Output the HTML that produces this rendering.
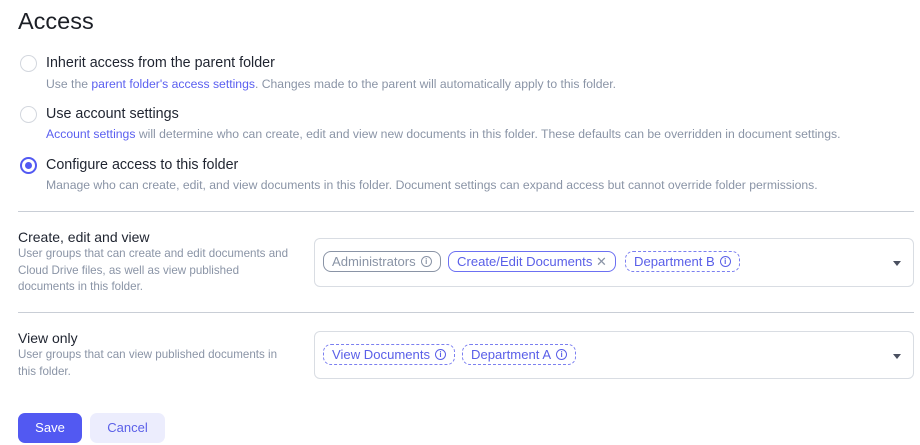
<!DOCTYPE html>
<html><head><style>
*{margin:0;padding:0;box-sizing:border-box}
body{width:920px;height:445px;background:#fff;font-family:"Liberation Sans",sans-serif;position:relative;overflow:hidden;color:#1f2430}
.a{position:absolute;white-space:nowrap}
h1{position:absolute;left:18px;top:8px;font-size:23.5px;font-weight:400;color:#1c1f26}
.r{position:absolute;left:20px;width:17px;height:17px;border:1.5px solid #d3d7de;border-radius:50%}
.r.on{border:2px solid #5259f2}
.r.on::after{content:"";position:absolute;left:3px;top:3px;width:7px;height:7px;border-radius:50%;background:#5259f2}
.l{font-size:14.3px;color:#1f2430;left:46px}
.d{font-size:12.2px;color:#8a94a6;left:46px}
.lk{color:#5a5ff0}
.hr{position:absolute;left:18px;width:896px;height:1px;background:#c9ced6}
.sl{left:18px;font-size:14px;color:#1f2430}
.sd{left:18px;font-size:11.6px;color:#8a94a6;line-height:16.5px}
.box{position:absolute;left:314px;width:600px;border:1px solid #d9dde3;border-radius:6px}
.chip{position:absolute;height:21px;border-radius:8px;font-size:13.1px;line-height:19px;padding:0 8px;white-space:nowrap;display:flex;align-items:center}
.g{border:1px solid #8a94a6;color:#8a94a6}
.p{border:1px solid #6c70f2;color:#5a5fe8}
.ds{border:1px dashed #7b7ff0;color:#5a5fe8}
.i{display:inline-block;width:11px;height:11px;border:1px solid currentColor;border-radius:50%;font-size:8px;line-height:9px;text-align:center;margin-left:5px;font-weight:bold}
.car{position:absolute;right:12px;width:0;height:0;border-left:4px solid transparent;border-right:4px solid transparent;border-top:5px solid #4a5060}
.btn{position:absolute;top:413px;height:30px;border-radius:7px;font-size:13px;text-align:center;line-height:30px}
</style></head><body>
<h1>Access</h1>
<div class="r" style="top:55px"></div>
<div class="a l" style="top:55px">Inherit access from the parent folder</div>
<div class="a d" style="top:77px">Use the <span class="lk">parent folder's access settings</span>. Changes made to the parent will automatically apply to this folder.</div>
<div class="r" style="top:106px"></div>
<div class="a l" style="top:106px">Use account settings</div>
<div class="a d" style="top:127px"><span class="lk">Account settings</span> will determine who can create, edit and view new documents in this folder. These defaults can be overridden in document settings.</div>
<div class="r on" style="top:157px"></div>
<div class="a l" style="top:157px">Configure access to this folder</div>
<div class="a d" style="top:178px">Manage who can create, edit, and view documents in this folder. Document settings can expand access but cannot override folder permissions.</div>
<div class="hr" style="top:211px"></div>
<div class="a sl" style="top:229px">Create, edit and view</div>
<div class="a sd" style="top:246px">User groups that can create and edit documents and<br>Cloud Drive files, as well as view published<br>documents in this folder.</div>
<div class="box" style="top:238px;height:49px"><div class="car" style="top:22px"></div></div>
<div class="chip g" style="left:323px;top:251px">Administrators<span class="i">i</span></div>
<div class="chip p" style="left:448px;top:251px">Create/Edit Documents&nbsp;<span style="color:#8a94a6">✕</span></div>
<div class="chip ds" style="left:625px;top:251px">Department B<span class="i">i</span></div>
<div class="hr" style="top:312px"></div>
<div class="a sl" style="top:330px">View only</div>
<div class="a sd" style="top:347px">User groups that can view published documents in<br>this folder.</div>
<div class="box" style="top:331px;height:48px"><div class="car" style="top:22px"></div></div>
<div class="chip ds" style="left:323px;top:344px">View Documents<span class="i">i</span></div>
<div class="chip ds" style="left:462px;top:344px">Department A<span class="i">i</span></div>
<div class="btn" style="left:18px;width:64px;background:#5259f2;color:#fff">Save</div>
<div class="btn" style="left:90px;width:75px;background:#ecedfd;color:#5a5fe8">Cancel</div>
</body></html>
